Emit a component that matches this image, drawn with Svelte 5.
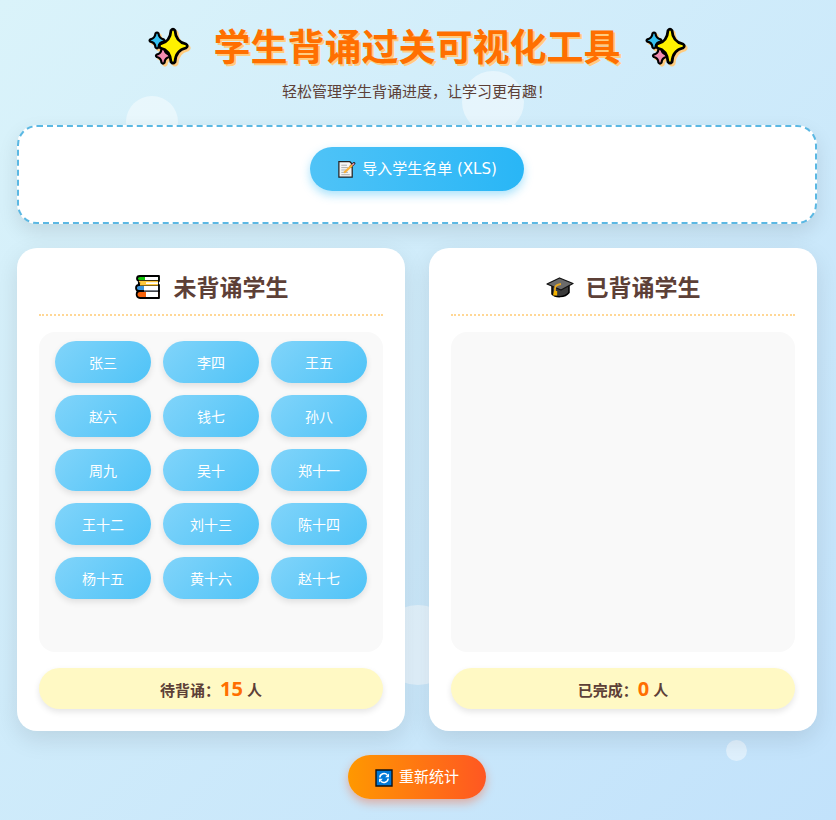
<script lang="ts">
	let waiting = $state([
		'张三', '李四', '王五',
		'赵六', '钱七', '孙八',
		'周九', '吴十', '郑十一',
		'王十二', '刘十三', '陈十四',
		'杨十五', '黄十六', '赵十七'
	]);
	let done: string[] = $state([]);

	const bubbles = [
		{ x: 126, y: 96, size: 52 },
		{ x: 462, y: 71, size: 62 },
		{ x: 378, y: 605, size: 80 },
		{ x: 726, y: 740, size: 21 }
	];

	function pass(name: string) {
		waiting = waiting.filter((n) => n !== name);
		done = [...done, name];
	}

	function unpass(name: string) {
		done = done.filter((n) => n !== name);
		waiting = [...waiting, name];
	}

	function reset() {
		waiting = [...waiting, ...done];
		done = [];
	}
</script>

{#snippet sparkles()}
	<svg class="sparkles" viewBox="3 4 42 42" aria-hidden="true">
		<g stroke="#000" stroke-width="2.200" stroke-linejoin="round">
			<path fill="#35c1f1" d="M10.500 11.500q1.500-2 3 0 .5 5 5.200 5.800 1.500 1.200 0 2.400-4.700.7-5.200 5.700-1.500 2-3 0-.5-5-5.200-5.700-1.500-1.200 0-2.400 4.700-.8 5.200-5.800z" />
			<path fill="#f28cb1" d="M16.500 27q1.500-2 3 0 .5 4.800 5 5.600 1.500 1.200 0 2.400-4.500.7-5 5.700-1.500 2-3 0-.5-5-4.800-5.700-1.500-1.200 0-2.400 4.300-.8 4.800-5.600z" />
			<path fill="#fff100" stroke-width="2.800" d="M26 8.500q2-2.600 4 0C30.500 16 33.500 20.500 41 22q2.600 2 0 4C33.500 27.500 30.500 32 30 39.800q-2 2.600-4 0C25.500 32 22.500 27.500 15.500 26q-2.600-2 0-4C22.500 20.500 25.500 16 26 8.500z" />
		</g>
	</svg>
{/snippet}

<div class="page">
	{#each bubbles as b}
		<span class="bubble" style="left: {b.x}px; top: {b.y}px; width: {b.size}px; height: {b.size}px"></span>
	{/each}

	<header>
		<h1>{@render sparkles()}<span>学生背诵过关可视化工具</span>{@render sparkles()}</h1>
		<p>轻松管理学生背诵进度，让学习更有趣！</p>
	</header>

	<section class="import">
		<button class="btn blue" type="button">
			<svg width="19" height="19" viewBox="0 0 20 20" aria-hidden="true">
				<path fill="#f5f5f5" stroke="#222" stroke-width="1.300" d="M2 1.800h11.500l2.500 2.500V18H2z" />
				<path stroke="#aaa" d="M4.500 5.500h6M4.500 8h7M4.500 10.500h5M4.500 13h7M4.500 15.500h9" />
				<path stroke="#222" stroke-width="2.800" stroke-linecap="round" d="M14.500 6.800l3.500-3.300" />
				<path stroke="#fbb034" stroke-width="2.200" d="M7.500 13.400l8.500-8" />
				<path stroke="#e58fa8" stroke-width="1.800" stroke-linecap="round" d="M16.500 5l1-1" />
			</svg>
			导入学生名单 (XLS)
		</button>
	</section>

	<main>
		<section class="panel">
			<h2>
				<svg width="28" height="28" viewBox="0 0 28 28" aria-hidden="true">
					<g stroke="#000" stroke-width="1.800" stroke-linejoin="round">
						<path fill="#16c60c" d="M6 3h19v5H6C2 8 2 3 6 3z" />
						<path fill="#ffc83d" d="M7 8h17v4H7C4 12 4 8 7 8z" />
						<path fill="#3a96dd" d="M5 12h20v6H5c-4 0-4-6 0-6z" />
						<path fill="#f7630c" d="M6 18h19v7H6c-4.500 0-4.500-7 0-7z" />
					</g>
					<path fill="#fff" d="M11 4h13v3H11zM12 9h12v2H12zM10 13h14v4H10zM12 19h12v5H12z" />
					<path stroke="#ffc83d" stroke-width="1.400" d="M5 8.500h19M6 11.800h18" />
					<path stroke="#8a8f98" stroke-width="1.400" d="M10 17.800h14" />
				</svg>
				未背诵学生
			</h2>
			<div class="list">
				{#each waiting as name}
					<button class="student" type="button" onclick={() => pass(name)}>{name}</button>
				{/each}
			</div>
			<p class="stat">待背诵：<b>{waiting.length}</b> 人</p>
		</section>

		<section class="panel">
			<h2>
				<svg width="28" height="28" viewBox="0 0 28 28" aria-hidden="true">
					<path fill="#3b3b3b" stroke="#000" stroke-width="1.500" stroke-linejoin="round" d="M6 12v9c3 3.500 13 4 17-1.500V12z" />
					<path fill="#6b6b6b" stroke="#111" stroke-width="1.300" stroke-linejoin="round" d="M13.500 5L27 10.500 15 17 1 11z" />
					<path fill="none" stroke="#e8a820" stroke-width="1.800" d="M15 11c-4 .5-6 1.500-6 4.500v4" />
					<path fill="#f5b400" d="M8 18h3.200v4.500H7z" />
				</svg>
				已背诵学生
			</h2>
			<div class="list">
				{#each done as name}
					<button class="student" type="button" onclick={() => unpass(name)}>{name}</button>
				{/each}
			</div>
			<p class="stat">已完成：<b>{done.length}</b> 人</p>
		</section>
	</main>

	<footer>
		<button class="btn orange" type="button" onclick={reset}>
			<svg width="18" height="18" viewBox="0 0 18 18" aria-hidden="true">
				<path fill="#0078d7" stroke="#111" stroke-width="1.400" d="M1 1h16v16H1z" />
				<path fill="none" stroke="#fff" stroke-width="1.500" d="M4.800 8.500a4.300 4.300 0 0 1 7.500-2.500M13.200 9.500a4.300 4.300 0 0 1-7.500 2.500" />
				<path fill="#fff" d="M14 4.500v3.800h-3.800zM4 13.500V9.700h3.800z" />
			</svg>
			重新统计
		</button>
	</footer>
</div>

<style>
	:global(body) {
		margin: 0;
	}

	.page {
		position: relative;
		box-sizing: border-box;
		min-height: 100vh;
		padding: 22px 19px 21px 17px;
		overflow: hidden;
		color: #5d4037;
		background: linear-gradient(135deg, #daf3fa, #c2e2fb);
		font-family: 'Noto Sans', 'Noto Sans CJK SC', sans-serif;
	}

	.bubble {
		position: absolute;
		border-radius: 50%;
		background: rgba(255, 255, 255, 0.45);
	}

	header,
	.import,
	main,
	footer {
		position: relative;
	}

	header {
		text-align: center;
	}

	h1 {
		display: flex;
		align-items: center;
		justify-content: center;
		gap: 24px;
		margin: 0;
		color: #ff6f00;
		font-size: 37px;
		line-height: 50px;
		text-shadow: 2px 2px 0 #ffcc80;
	}

	.sparkles {
		width: 42px;
		height: 42px;
		filter: drop-shadow(2px 2px 0 #ffcc80);
	}

	header p {
		margin: 8px 0 22px;
		font-size: 15px;
		line-height: 23px;
	}

	.import {
		display: flex;
		justify-content: center;
		margin-bottom: 24px;
		padding: 20px 20px 31px;
		border: 2px dashed #5bb8e3;
		border-radius: 20px;
		background: #fff;
		box-shadow: 0 8px 20px rgba(0, 0, 0, 0.1);
	}

	.btn {
		display: flex;
		align-items: center;
		gap: 6px;
		padding: 11px 27px 10px;
		border: 0;
		border-radius: 30px;
		color: #fff;
		font-family: 'DejaVu Sans', 'Noto Sans CJK SC', sans-serif;
		font-size: 15px;
		line-height: 23px;
		cursor: pointer;
	}

	.blue {
		background: linear-gradient(90deg, #4fc3f7, #29b6f6);
		box-shadow: 0 4px 10px rgba(41, 182, 246, 0.4);
	}

	.orange {
		background: linear-gradient(90deg, #ff9800, #ff5722);
		box-shadow: 0 4px 10px rgba(255, 87, 34, 0.4);
	}

	main {
		display: grid;
		grid-template-columns: 1fr 1fr;
		gap: 24px;
	}

	.panel {
		padding: 22px;
		border-radius: 20px;
		background: #fff;
		box-shadow: 0 8px 25px rgba(0, 0, 0, 0.1);
	}

	h2 {
		display: flex;
		align-items: center;
		justify-content: center;
		gap: 12px;
		margin: 0 0 16px;
		padding-bottom: 10px;
		border-bottom: 2px dotted #ffd795;
		font-size: 23px;
		line-height: 34px;
	}

	.list {
		display: grid;
		grid-template-columns: repeat(3, 1fr);
		align-content: start;
		gap: 12px;
		box-sizing: border-box;
		height: 320px;
		padding: 9px 16px;
		overflow-y: auto;
		border-radius: 16px;
		background: #f9f9f9;
	}

	.student {
		height: 42px;
		padding: 0;
		border: 0;
		border-radius: 25px;
		color: #fff;
		background: linear-gradient(135deg, #81d4fa, #4fc3f7);
		box-shadow: 0 3px 6px rgba(0, 0, 0, 0.1);
		font: inherit;
		font-size: 14px;
		cursor: pointer;
	}

	.stat {
		margin: 16px 0 0;
		padding: 10px 8px 6px;
		border-radius: 25px;
		background: #fff9c4;
		box-shadow: 0 3px 6px rgba(0, 0, 0, 0.1);
		font-size: 15px;
		font-weight: 700;
		line-height: 25px;
		text-align: center;
	}

	.stat b {
		color: #ff6f00;
		font-size: 20px;
		font-weight: 700;
		line-height: 1;
	}

	footer {
		display: flex;
		justify-content: center;
		margin-top: 24px;
	}
</style>
